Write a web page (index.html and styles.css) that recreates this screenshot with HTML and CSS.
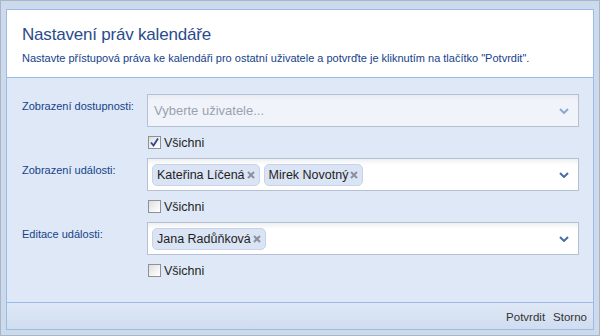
FILE: index.html
```html
<!DOCTYPE html>
<html>
<head>
  <meta charset="utf-8">
  <link rel="stylesheet" href="styles.css">
</head>
<body>
  <div class="window">
    <div class="dialog">
      <div class="dialog-header">
        <div class="dialog-title">Nastavení práv kalendáře</div>
        <div class="dialog-desc">Nastavte přístupová práva ke kalendáři pro ostatní uživatele a potvrďte je kliknutím na tlačítko "Potvrdit".</div>
      </div>

      <div class="dialog-body">
        <div class="field-row">
          <label class="field-label">Zobrazení dostupnosti:</label>
          <div class="field">
            <div class="combo disabled">
              <span class="placeholder">Vyberte uživatele...</span>
              <svg class="chevron" width="10" height="6" viewBox="0 0 10 6"><polyline points="1,1 5,5 9,1" fill="none" stroke="#8ea8d2" stroke-width="2"/></svg>
            </div>
            <div class="check-line">
              <span class="check checked">
                <svg width="11" height="11" viewBox="0 0 11 11"><polyline points="2,5.5 4.5,8.5 9,1.5" fill="none" stroke="#2b4590" stroke-width="1.8"/></svg>
              </span>
              <span class="check-text">Všichni</span>
            </div>
          </div>
        </div>

        <div class="field-row">
          <label class="field-label">Zobrazení události:</label>
          <div class="field">
            <div class="combo">
              <span class="tag">Kateřina Líčená <svg class="tag-x" width="8" height="8" viewBox="0 0 8 8"><path d="M1 1L7 7M7 1L1 7" stroke="#8b919b" stroke-width="2"/></svg></span>
              <span class="tag">Mirek Novotný <svg class="tag-x" width="8" height="8" viewBox="0 0 8 8"><path d="M1 1L7 7M7 1L1 7" stroke="#8b919b" stroke-width="2"/></svg></span>
              <svg class="chevron" width="10" height="6" viewBox="0 0 10 6"><polyline points="1,1 5,5 9,1" fill="none" stroke="#4a6da8" stroke-width="2"/></svg>
            </div>
            <div class="check-line">
              <span class="check"></span>
              <span class="check-text">Všichni</span>
            </div>
          </div>
        </div>

        <div class="field-row">
          <label class="field-label">Editace události:</label>
          <div class="field">
            <div class="combo">
              <span class="tag">Jana Radůňková <svg class="tag-x" width="8" height="8" viewBox="0 0 8 8"><path d="M1 1L7 7M7 1L1 7" stroke="#8b919b" stroke-width="2"/></svg></span>
              <svg class="chevron" width="10" height="6" viewBox="0 0 10 6"><polyline points="1,1 5,5 9,1" fill="none" stroke="#4a6da8" stroke-width="2"/></svg>
            </div>
            <div class="check-line">
              <span class="check"></span>
              <span class="check-text">Všichni</span>
            </div>
          </div>
        </div>
      </div>

      <div class="dialog-footer">
        <span class="footer-btn">Potvrdit</span>
        <span class="footer-btn">Storno</span>
      </div>
    </div>
  </div>
</body>
</html>
```

FILE: styles.css
```css
body {
  margin: 0;
  font-family: "Liberation Sans", Arial, sans-serif;
  background: #cfdbea;
}

.window {
  width: 600px;
  height: 336px;
  box-sizing: border-box;
  border: 1px solid #a9b6c8;
  background: #cddaeb;
  padding: 8px 5px 5px 5px;
}

.dialog {
  height: 100%;
  box-sizing: border-box;
  border: 1px solid #99bbe8;
  display: flex;
  flex-direction: column;
}

.dialog-header {
  height: 68px;
  box-sizing: border-box;
  background: #fff;
  padding: 14px 15px 0 15px;
  border-bottom: 1px solid #99bbe8;
  flex-shrink: 0;
}

.dialog-title {
  font-size: 17px;
  line-height: 22px;
  letter-spacing: -0.2px;
  color: #2a4b8d;
}

.dialog-desc {
  margin-top: 5px;
  font-size: 11px;
  line-height: 14px;
  color: #15428b;
}

.dialog-body {
  flex: 1;
  background: #dfe8f6;
  padding: 16px 14px 0 15px;
  border-bottom: 1px solid #99bbe8;
}

.field-row {
  display: flex;
}

.field-label {
  width: 125px;
  flex-shrink: 0;
  padding-top: 5px;
  font-size: 11px;
  line-height: 14px;
  color: #15428b;
}

.field {
  flex: 1;
}

.combo {
  height: 33px;
  box-sizing: border-box;
  border: 1px solid #b5c1d3;
  background: linear-gradient(#eef0f3 0, #fff 6px, #fff 100%);
  display: flex;
  align-items: center;
  gap: 4px;
  padding: 0 4px;
  position: relative;
}

.combo.disabled {
  background: linear-gradient(#e8ecf2 0, #f0f4fa 6px, #f0f4fa 100%);
}

.placeholder {
  padding-left: 2px;
  font-size: 13px;
  color: #9aa2ae;
}

.chevron {
  position: absolute;
  right: 9px;
  top: 13px;
}

.tag {
  height: 22px;
  box-sizing: border-box;
  display: flex;
  align-items: center;
  padding: 0 4px 0 4px;
  background: #dae4f4;
  border: 1px solid #c6d4ea;
  border-radius: 5px;
  font-size: 12.5px;
  color: #1e1e1e;
}

.tag-x {
  margin-left: 2px;
}

.check-line {
  display: flex;
  align-items: center;
  height: 13px;
  margin: 9px 0 9px 1px;
}

.check {
  width: 13px;
  height: 13px;
  box-sizing: border-box;
  border: 1px solid #8e9196;
  background: linear-gradient(135deg, #dcdcdc 0%, #f4f4f4 60%, #fff 100%);
  display: flex;
  align-items: center;
  justify-content: center;
}

.check-text {
  margin-left: 3px;
  font-size: 12.5px;
  color: #1e1e1e;
}

.dialog-footer {
  height: 26px;
  flex-shrink: 0;
  background: linear-gradient(#dfe8f6, #d0ddef);
  display: flex;
  justify-content: flex-end;
  align-items: center;
  gap: 8px;
  padding: 2px 6px 0 0;
  box-sizing: border-box;
}

.footer-btn {
  font-size: 11.5px;
  color: #333;
}
```
